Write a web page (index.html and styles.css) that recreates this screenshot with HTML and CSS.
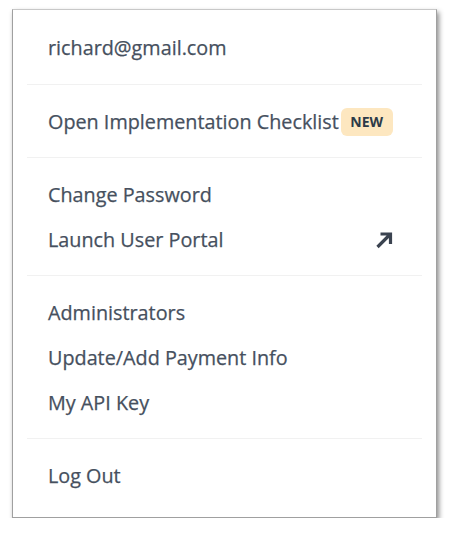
FILE: index.html
```html
<!DOCTYPE html>
<html>
<head>
<meta charset="utf-8">
<link rel="stylesheet" href="styles.css">
</head>
<body>
<div class="menu">
  <div class="group group-first">
    <div class="item">richard@gmail.com</div>
  </div>
  <div class="sep"></div>
  <div class="group">
    <div class="item"><span>Open Implementation Checklist</span><span class="badge">NEW</span></div>
  </div>
  <div class="sep"></div>
  <div class="group">
    <div class="item">Change Password</div>
    <div class="item item-split"><span>Launch User Portal</span>
      <svg class="arrow" width="20" height="20" viewBox="0 0 20 20"><path d="M3.5 17 L15.5 5 M6.5 4 H16.5 V14" fill="none" stroke="#3b4350" stroke-width="3.2" stroke-linecap="butt" stroke-linejoin="miter"/></svg>
    </div>
  </div>
  <div class="sep"></div>
  <div class="group">
    <div class="item">Administrators</div>
    <div class="item">Update/Add Payment Info</div>
    <div class="item">My API Key</div>
  </div>
  <div class="sep"></div>
  <div class="group group-last">
    <div class="item">Log Out</div>
  </div>
</div>
</body>
</html>
```
FILE: styles.css
```css
html, body {
  margin: 0;
  padding: 0;
  background: #ffffff;
}
body {
  padding: 9px 0 0 12px;
  font-family: "Open Sans", "Liberation Sans", sans-serif;
}
.menu {
  width: 425px;
  height: 509px;
  box-sizing: border-box;
  border: 1px solid #a0a0a0;
  border-top-color: #c8c8c8;
  background: #ffffff;
  box-shadow: 2px 3px 5px rgba(0, 0, 0, 0.45);
  display: flex;
  flex-direction: column;
}
.group {
  padding: 14px 0 13px 0;
}
.group-first {
  padding: 15px 0 14px 0;
}
.group-last {
  padding-bottom: 0;
}
.sep {
  height: 1px;
  background: #f1f1f1;
  margin: 0 14px 0 14px;
}
.item {
  height: 45px;
  display: flex;
  align-items: center;
  padding: 0 42px 0 35px;
  font-size: 19.8px;
  font-weight: 400;
  color: #46505e;
  -webkit-text-stroke: 0.25px #46505e;
}
.item-split {
  justify-content: space-between;
}
.badge {
  display: inline-flex;
  align-items: center;
  justify-content: center;
  margin-left: 2px;
  width: 52px;
  height: 28px;
  border-radius: 6px;
  background: #fde7c0;
  color: #2c3a48;
  -webkit-text-stroke: 0;
  font-size: 14px;
  font-weight: 700;
}
.arrow {
  display: block;
}
```
